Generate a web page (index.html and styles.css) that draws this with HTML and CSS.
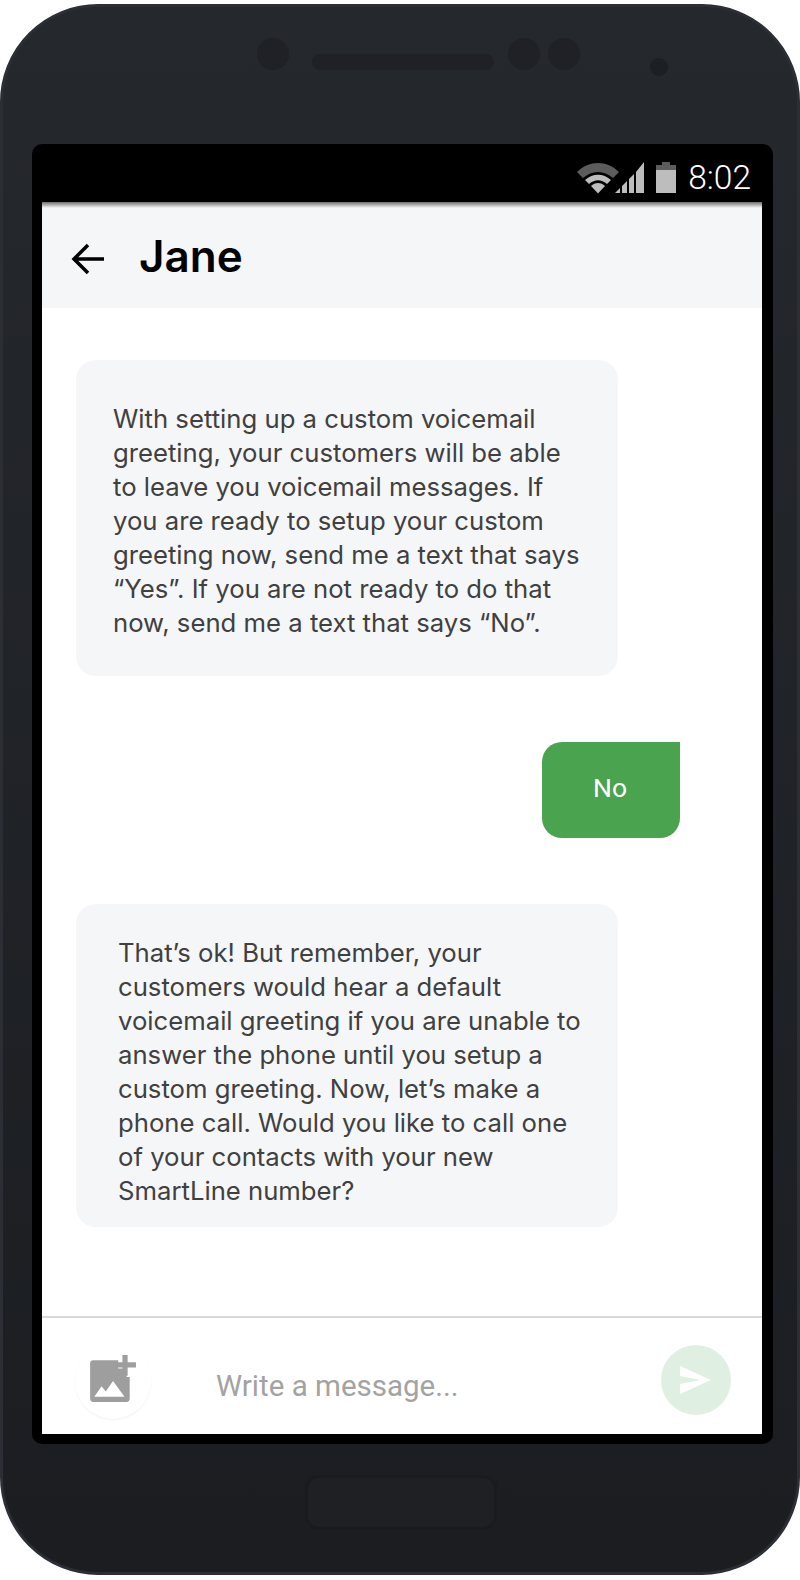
FILE: index.html
```html
<!DOCTYPE html>
<html lang="en">
<head>
<meta charset="utf-8">
<title>Jane</title>
<link rel="stylesheet" href="styles.css">
</head>
<body>
<div class="phone">
  <div class="top">
    <span class="lens lens-a"></span>
    <span class="speaker"></span>
    <span class="lens lens-b"></span>
    <span class="lens lens-c"></span>
    <span class="sensor"></span>
  </div>
  <div class="bezel">
    <div class="status">
      <svg class="wifi" width="44" height="32" viewBox="0 0 44 32">
        <path d="M0 10 C12 -2 30 -2 42 10 L36 16 C27 8 15 8 6 16 Z" fill="#5c5c5c"/>
        <path d="M8 18 C16 11 26 11 34 18 L30 22 C24 17 18 17 12 22 Z" fill="#bdbdbd"/>
        <path d="M14 24 C18 20 24 20 28 24 L21 31.500 Z" fill="#bdbdbd"/>
      </svg>
      <svg class="signal" width="32" height="32" viewBox="0 0 32 32">
        <path d="M2 31 L7 26 V31 Z M9 31 V24 L14 19 V31 Z M16 31 V17 L21 12 V31 Z M23 31 V10 L31 0 V31 Z" fill="#bdbdbd"/>
      </svg>
      <svg class="battery" width="20" height="31" viewBox="0 0 20 31">
        <path d="M6 0 H14 V3 H20 V8 H0 V3 H6 Z" fill="#5c5c5c"/>
        <rect x="0" y="8" width="20" height="23" fill="#bdbdbd"/>
      </svg>
      <span class="time">8:02</span>
    </div>
    <div class="screen">
      <header class="bar">
        <svg class="back" width="34" height="34" viewBox="0 0 34 34">
          <path d="M33 17 H3 M17 3 L3 17 L17 31" fill="none" stroke="#000" stroke-width="3.500"/>
        </svg>
        <h1 class="name">Jane</h1>
      </header>
      <main class="thread">
        <div class="msg msg-first">With setting up a custom voicemail greeting, your customers will be able to leave you voicemail messages. If you are ready to setup your custom greeting now, send me a text that says “Yes”. If you are not ready to do that now, send me a text that says “No”.</div>
        <div class="reply">No</div>
        <div class="msg msg-last">That’s ok! But remember, your customers would hear a default voicemail greeting if you are unable to answer the phone until you setup a custom greeting. Now, let’s make a phone call. Would you like to call one of your contacts with your new SmartLine number?</div>
      </main>
      <footer class="compose">
        <div class="attach">
          <svg width="50" height="50" viewBox="0 0 48 48">
            <path d="M3 5 H30 V13 H38 V21 H41 V42 Q41 45 38 45 H6 Q3 45 3 42 V8 Q3 5 6 5 Z" fill="#9e9e9e"/>
            <path d="M7 40 L14 30 L18 35 L25 25 L36 40 Z" fill="#fff"/>
            <path d="M34 0 H39 V7 H47 V12 H39 V20 H34 V12 H27 V7 H34 Z" fill="#9e9e9e"/>
          </svg>
        </div>
        <span class="placeholder">Write a message...</span>
        <div class="send">
          <svg width="32" height="28" viewBox="0 0 32 28">
            <path d="M0 0 L31 14 L0 28 V18 L21 14 L0 10 Z" fill="#fff"/>
          </svg>
        </div>
      </footer>
    </div>
  </div>
  <div class="bottom"><span class="home"></span></div>
</div>
</body>
</html>
```
FILE: styles.css
```css
* { box-sizing: border-box; }
html, body { margin: 0; padding: 0; background: #fff; }
body { width: 800px; height: 1580px; padding-top: 4px; overflow: hidden; }

.phone {
  width: 800px;
  height: 1571px;
  border-radius: 98px;
  background: linear-gradient(180deg, #25282d 0%, #1b1d21 100%);
  border: 3px solid #2b2e35;
  display: flex;
  flex-direction: column;
  align-items: center;
}

.top { position: relative; width: 100%; height: 137px; flex: none; }
.lens, .sensor, .speaker { position: absolute; background: #1f2126; }
.lens { width: 32px; height: 32px; border-radius: 50%; top: 31px; }
.lens-a { left: 254px; }
.lens-b { left: 505px; }
.lens-c { left: 545px; }
.speaker { left: 309px; top: 47px; width: 182px; height: 16px; border-radius: 8px; }
.sensor { left: 647px; top: 51px; width: 18px; height: 18px; border-radius: 50%; background: #1c1f24; }

.bezel {
  width: 741px;
  height: 1300px;
  flex: none;
  margin-left: 5px;
  background: #000;
  border-radius: 10px;
  padding: 0 11px 10px 10px;
  display: flex;
  flex-direction: column;
}

.status {
  height: 58px;
  flex: none;
  display: flex;
  justify-content: flex-end;
  align-items: flex-start;
  padding: 14px 11px 0 0;
}
.wifi { margin-right: -8px; margin-top: 4px; }
.signal { margin-top: 4px; margin-right: 11px; }
.battery { margin-top: 4px; margin-right: 12px; }
.time {
  font-family: Roboto, sans-serif;
  font-weight: 300;
  font-size: 33.500px;
  line-height: 40px;
  color: #fff;
}

.screen {
  flex: 1;
  background: #fff;
  display: flex;
  flex-direction: column;
  box-shadow: 0 -1px 0 #000;
  position: relative;
}
.screen::before {
  content: "";
  position: absolute;
  left: 0;
  right: 0;
  top: 0;
  height: 6px;
  background: linear-gradient(180deg, rgba(0,0,0,.55), rgba(0,0,0,0));
}

.bar {
  height: 106px;
  flex: none;
  background: #f5f6f8;
  display: flex;
  align-items: center;
  padding: 6px 0 0 29px;
  gap: 34px;
}
.back { flex: none; margin-top: 2px; }
.name {
  margin: 0 0 4px;
  font-family: Inter, sans-serif;
  font-weight: 600;
  font-size: 44px;
  line-height: 50px;
  color: #000;
}

.thread {
  flex: 1;
  display: flex;
  flex-direction: column;
  padding: 52px 82px 0 34px;
}
.msg {
  width: 542px;
  background: #f5f6f8;
  border-radius: 20px;
  font-family: Inter, sans-serif;
  font-size: 25.700px;
  line-height: 34px;
  color: #404040;
}
.msg-first { height: 316px; padding: 42px 30px 0 37px; }
.msg-last { height: 323px; padding: 32px 25px 0 42px; margin-top: 66px; }
.reply {
  align-self: flex-end;
  width: 138px;
  height: 96px;
  margin-top: 66px;
  padding: 0 2px 5px 0;
  background: #4aa34f;
  color: #fff;
  border-radius: 20px 0 20px 20px;
  display: flex;
  align-items: center;
  justify-content: center;
  font-family: Roboto, sans-serif;
  font-size: 26.500px;
}

.compose {
  height: 118px;
  flex: none;
  border-top: 2px solid #d8d8d8;
  display: flex;
  align-items: center;
  padding: 0 31px 0 33px;
  position: relative;
}
.attach {
  width: 76px;
  height: 76px;
  flex: none;
  margin-top: 10px;
  border-radius: 50%;
  box-shadow: 0 1px 2px rgba(0,0,0,.06);
  display: flex;
  align-items: center;
  justify-content: center;
  padding: 0 2px 2px 0;
}
.placeholder {
  margin-left: 65px;
  margin-top: 20px;
  flex: 1;
  font-family: Roboto, sans-serif;
  font-size: 29.500px;
  color: #a3a3a3;
}
.send {
  width: 70px;
  height: 70px;
  flex: none;
  margin-top: 8px;
  border-radius: 50%;
  background: #dff0e3;
  display: flex;
  align-items: center;
  justify-content: center;
}

.bottom {
  flex: 1;
  width: 100%;
  display: flex;
  justify-content: center;
  padding-top: 31px;
}
.home {
  width: 192px;
  height: 55px;
  margin-left: 2px;
  border-radius: 14px;
  border: 3px solid #191b1f;
  background: #1e2024;
}
```
